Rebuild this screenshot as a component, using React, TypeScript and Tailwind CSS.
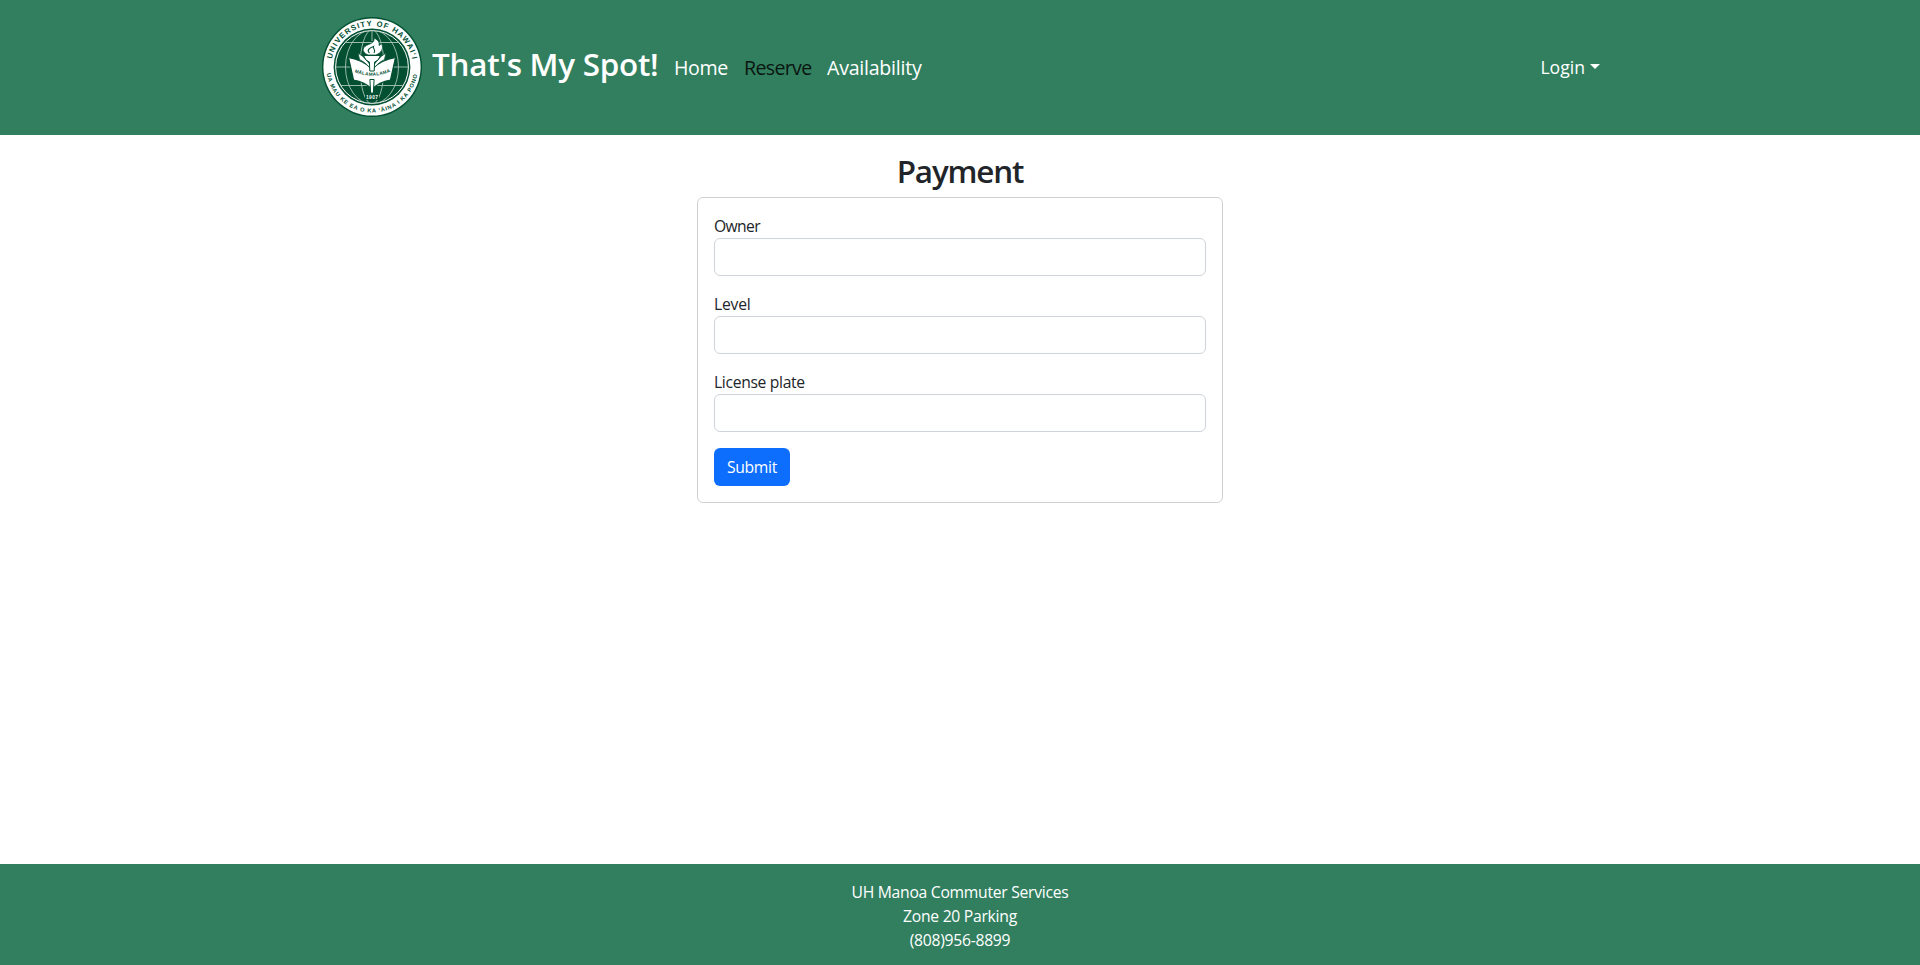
import type { ReactNode } from 'react';

function Seal() {
  return (
    <svg viewBox="0 0 100 100" className="block size-[100px] shrink-0 font-['Liberation_Sans',sans-serif]" role="img">
      <defs>
        <path id="seal-top" d="M 9.1 50 A 40.9 40.9 0 0 1 90.9 50" />
        <path id="seal-bottom" d="M 4.5 55 A 45.8 45.8 0 0 0 95.5 55" />
        <path id="seal-motto" d="M 31 54.5 Q 50 63 69 54.5" />
        <clipPath id="seal-globe">
          <circle cx="50" cy="50" r="36.5" />
        </clipPath>
      </defs>
      <circle cx="50" cy="50" r="50" fill="#024f32" />
      <circle cx="50" cy="50" r="48.6" fill="#fff" />
      <circle cx="50" cy="50" r="38.4" fill="#024f32" />
      <g fill="none" stroke="#a9c6b7" strokeWidth=".9">
        <circle cx="50" cy="50" r="36.4" stroke="#fff" strokeWidth="1" />
        <g clipPath="url(#seal-globe)">
          <ellipse cx="50" cy="50" rx="26.5" ry="37" />
          <ellipse cx="50" cy="50" rx="12" ry="37" />
          <path d="M50 13V24M13 50H87M17 25.5H83M17 68.5H83" />
        </g>
      </g>
      <path d="M26.5 40.5 Q41 43 50 52 Q59 43 73.5 40.5 L68.5 63 Q57 65 50 72 Q43 65 31.5 63 Z" fill="#fff" stroke="#024f32" strokeWidth="1.2" />
      <path d="M36 36 Q46 42 50 52 Q54 42 64 36 L62.5 42.5 Q54 47 50 54 Q46 47 37.5 42.5 Z" fill="#fff" stroke="#024f32" strokeWidth=".8" />
      <path d="M41.5 38.5 H58.5 L56 43 L52.6 45 L52.2 54 H47.8 L47.4 45 L44 43 Z" fill="#fff" stroke="#024f32" strokeWidth="1" />
      <path d="M47.9 62.5 H52.1 L51.4 75 L50 77 L48.6 75 Z" fill="#fff" stroke="#024f32" strokeWidth="1" />
      <path d="M46 38 C38.5 34.5 40.5 29.5 46.5 27.5 C50.5 26 52.5 24.5 52 21 C57.5 23.5 57.5 26.5 57 28.5 L59.5 26.5 C62 32 59.5 35.5 54 38 Z" fill="#fff" stroke="#024f32" strokeWidth=".8" />
      <path d="M47.5 36 C44.5 33.5 47 31 51.5 29.5 C50.5 32 54.5 32.5 52 36" fill="none" stroke="#024f32" strokeWidth="1.1" />
      <g fill="#024f32" fontWeight="700">
        <text fontSize="7.6">
          <textPath href="#seal-top" startOffset="8" textLength="112.5" lengthAdjust="spacing">UNIVERSITY OF HAWAIʻI</textPath>
        </text>
        <text fontSize="5.6">
          <textPath href="#seal-bottom" startOffset="1.5" textLength="129" lengthAdjust="spacing">UA MAU KE EA O KA ʻĀINA I KA PONO</textPath>
        </text>
        <text fontSize="4.6">
          <textPath href="#seal-motto" startOffset="1.5" textLength="37" lengthAdjust="spacing">MĀLAMALAMA</textPath>
        </text>
      </g>
      <path d="M43 78.5H57V83H43Z" fill="#024f32" />
      <text x="50.2" y="82.4" textAnchor="middle" fontSize="4.8" fontWeight="700" letterSpacing=".4" fill="#fff">1907</text>
    </svg>
  );
}

function Field({ label, children }: { label: string; children: ReactNode }) {
  return (
    <label className="mb-4 block">
      <span className="block h-6 leading-6">{children}</span>
      <input
        type="text"
        aria-label={label}
        className="block h-[38px] w-full rounded-md border border-[#ced4da] bg-white px-3 outline-none"
      />
    </label>
  );
}

export default function App() {
  return (
    <div className="flex h-[965px] flex-col bg-white font-['Open_Sans',sans-serif] text-[15.7px] leading-6 text-[#212529]">
      <header className="h-[135px] shrink-0 bg-[#327f5f]">
        <div className="mx-auto flex h-full w-[1276px] items-start text-white">
          <div className="pt-[17px]"><Seal /></div>
          <a className="ml-[10px] mt-[45px] w-[242px] whitespace-nowrap text-[31.4px] leading-[38px] font-semibold tracking-[-0.25px]">That's My Spot!</a>
          <nav className="mt-[53px] flex whitespace-nowrap text-[19.6px] leading-[30px]">
            <a className="w-[70px] tracking-[-0.35px]">Home</a>
            <a className="w-[83px] tracking-[-0.67px] text-[#09160f]">Reserve</a>
            <a className="tracking-[-0.25px]">Availability</a>
          </nav>
          <button className="mt-[54px] -mr-[2px] ml-auto flex text-[17.6px] leading-[27px]">
            Login
            <span className="mt-[10px] ml-[5px] border-x-[5.5px] border-t-[5.5px] border-x-transparent border-t-white" />
          </button>
        </div>
      </header>

      <main className="mx-auto w-[526px] grow pt-[17px]">
        <h2 className="mb-[7px] text-center text-[31.4px] leading-[38px] font-semibold tracking-[-1.15px]">Payment</h2>
        <form className="rounded-md border border-[#d0d1d3] px-4 pt-4 pb-4">
          <Field label="Owner"><span className="tracking-[-0.65px]">Owner</span></Field>
          <Field label="Level"><span className="tracking-[-0.2px]">Level</span></Field>
          <Field label="License plate"><span className="tracking-[-0.33px]">License plate</span></Field>
          <button type="button" className="block h-[38px] w-[76px] rounded-md bg-[#0d6efd] tracking-[-0.35px] text-white">Submit</button>
        </form>
      </main>

      <footer className="h-[101px] shrink-0 bg-[#327f5f] pt-4 text-center tracking-[-0.27px] text-white">
        <div>UH Manoa Commuter Services</div>
        <div>Zone 20 Parking</div>
        <div>(808)956-8899</div>
      </footer>
    </div>
  );
}
